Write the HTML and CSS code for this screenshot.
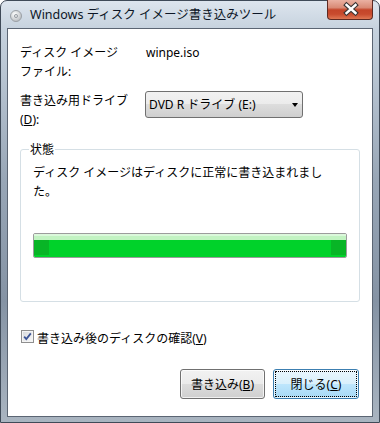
FILE: index.html
```html
<!DOCTYPE html>
<html lang="ja">
<head>
    <meta charset="UTF-8">
    <meta name="viewport" content="width=device-width, initial-scale=1.0">
    <title>Windows ディスク イメージ書き込みツール</title>
    <link rel="stylesheet" href="styles.css">
</head>
<body>

    <div class="window">
        <div class="titlebar">
            <svg class="app-icon" width="12" height="12" viewBox="0 0 12 12">
                <defs>
                    <radialGradient id="disc" cx="40%" cy="35%" r="70%">
                        <stop offset="0" stop-color="#ffffff"/>
                        <stop offset="1" stop-color="#b4b8bc"/>
                    </radialGradient>
                </defs>
                <circle cx="6" cy="6" r="5.5" fill="url(#disc)" stroke="#9ba0a6"/>
                <circle cx="6" cy="6" r="1.6" fill="#d8dadc" stroke="#8d9299" stroke-width="0.8"/>
            </svg>
            <span class="title">Windows ディスク イメージ書き込みツール</span>
            <div class="close-btn">
                <svg width="46" height="20" viewBox="0 0 46 20">
                    <path d="M19.5 6 L28.5 14 M28.5 6 L19.5 14" stroke="#3b3535" stroke-width="4.6" stroke-linecap="square"/>
                    <path d="M19.5 6 L28.5 14 M28.5 6 L19.5 14" stroke="#ffffff" stroke-width="2.4" stroke-linecap="square"/>
                </svg>
            </div>
        </div>

        <div class="client">
            <div class="form-grid">
                <div class="label">ディスク イメージ<br>ファイル:</div>
                <div class="value">winpe.iso</div>

                <div class="label">書き込み用ドライブ<br>(<u>D</u>):</div>
                <div class="select">
                    <span>DVD R ドライブ (E:)</span>
                    <span class="arrow"></span>
                </div>
            </div>

            <fieldset class="status">
                <legend>状態</legend>
                <p class="status-text">ディスク イメージはディスクに正常に書き込まれまし<br>た。</p>
                <div class="progress">
                    <div class="progress-shine"></div>
                    <div class="progress-bar">
                        <span class="cap"></span>
                        <span class="cap"></span>
                    </div>
                </div>
            </fieldset>

            <label class="check">
                <svg class="check-box" width="13" height="13" viewBox="0 0 13 13">
                    <defs>
                        <linearGradient id="cb" x1="0" y1="0" x2="1" y2="1">
                            <stop offset="0" stop-color="#d9dbde"/>
                            <stop offset="1" stop-color="#f7f7f7"/>
                        </linearGradient>
                    </defs>
                    <rect x="0.5" y="0.5" width="12" height="12" fill="#f4f4f4" stroke="#8f8f8f"/>
                    <rect x="2" y="2" width="9" height="9" fill="url(#cb)"/>
                    <path d="M3.2 6.6 L5.3 9 L9.8 3.4" fill="none" stroke="#3c5496" stroke-width="1.8"/>
                </svg>
                <span>書き込み後のディスクの確認(<u>V</u>)</span>
            </label>

            <div class="buttons">
                <button class="btn">書き込み(<u>B</u>)</button>
                <button class="btn btn-default">閉じる(<u>C</u>)</button>
            </div>
        </div>
    </div>

</body>
</html>
```

FILE: styles.css
```css
body {
    margin: 0;
    font-family: "Noto Sans", "Noto Sans CJK JP", sans-serif;
    font-size: 12px;
    color: #000;
}

/* Рамка окна */
.window {
    width: 380px;
    height: 423px;
    box-sizing: border-box;
    border: 1px solid #3f4a58;
    border-radius: 7px 7px 0 0;
    padding: 0 6px 5px;
    display: flex;
    flex-direction: column;
    background: linear-gradient(180deg, #dde5ee 0, #c6d2de 28px, #98a6b6 180px, #8593a4 300px, #aab5c1 423px);
}

.titlebar {
    height: 27px;
    display: flex;
    align-items: center;
}

.app-icon {
    margin: 3px 0 0 3px;
}

.title {
    margin-left: 8px;
    line-height: 19px;
    font-size: 12.5px;
    color: #0c1626;
}

.close-btn {
    margin-left: auto;
    align-self: flex-start;
    margin-top: -1px;
    width: 46px;
    height: 20px;
    box-sizing: border-box;
    border: 1px solid #5e2a22;
    border-top: none;
    border-radius: 0 0 4px 4px;
    background: linear-gradient(180deg, #eab1a2 0, #d98a75 40%, #c44529 52%, #c84b2e 75%, #df7753 100%);
    overflow: hidden;
}

.close-btn svg {
    display: block;
    margin: -1px;
}

/* Клиентская область */
.client {
    flex: 1;
    border: 1px solid #5b6573;
    background: #fff;
    padding: 14px 12px 0;
}

.form-grid {
    display: grid;
    grid-template-columns: 125px 1fr;
    row-gap: 10px;
    line-height: 19px;
}

.value {
    padding-left: 1px;
}

.select {
    width: 158px;
    height: 27px;
    box-sizing: border-box;
    border: 1px solid #707070;
    border-radius: 3px;
    padding: 0 4px 0 3px;
    display: flex;
    align-items: center;
    justify-content: space-between;
    background: linear-gradient(180deg, #f2f2f2 0, #ebebeb 50%, #dddddd 50%, #cfcfcf 100%);
}

.arrow {
    width: 0;
    height: 0;
    border-left: 3.5px solid transparent;
    border-right: 3.5px solid transparent;
    border-top: 4px solid #000;
    margin-top: 1px;
}

/* Группа "Состояние" */
.status {
    margin: 11px 0 0;
    border: 1px solid #d5dfe5;
    border-radius: 3px;
    padding: 4px 12px 43px;
    line-height: 19px;
}

.status legend {
    padding: 0 1px;
    margin-left: -4px;
}

.status-text {
    margin: 0;
}

.progress {
    margin-top: 32px;
    height: 25px;
    box-sizing: border-box;
    border: 1px solid #9c9c9c;
    border-radius: 2px;
    display: flex;
    flex-direction: column;
    overflow: hidden;
}

.progress-shine {
    height: 6px;
    background: linear-gradient(180deg, #dbf8db 0, #dbf8db 2px, #c2f3c2 2px);
}

.progress-bar {
    flex: 1;
    display: flex;
    justify-content: space-between;
    background: #00d22a;
}

.cap {
    width: 15px;
    height: 15px;
    background: #08b526;
}

/* Флажок */
.check {
    margin-top: 27px;
    display: flex;
    align-items: flex-start;
    line-height: 19px;
}

.check-box {
    margin: 1px 3px 0 1px;
}

/* Кнопки */
.buttons {
    margin-top: 21px;
    display: flex;
    justify-content: flex-end;
    gap: 8px;
    padding-right: 1px;
}

.btn {
    height: 30px;
    width: 85px;
    padding: 0;
    font: inherit;
    color: #000;
    border: 1px solid #707070;
    border-radius: 3px;
    background: linear-gradient(180deg, #f2f2f2 0, #ebebeb 50%, #dddddd 50%, #cfcfcf 100%);
    box-shadow: inset 0 0 0 1px rgba(255, 255, 255, 0.7);
}

.btn-default {
    width: 86px;
    border-color: #3c7fb1;
    background: linear-gradient(180deg, #eaf6fd 0, #d9f0fc 50%, #bee6fd 50%, #a7d9f5 100%);
    outline: 1px dotted #000;
    outline-offset: -3px;
}
```
